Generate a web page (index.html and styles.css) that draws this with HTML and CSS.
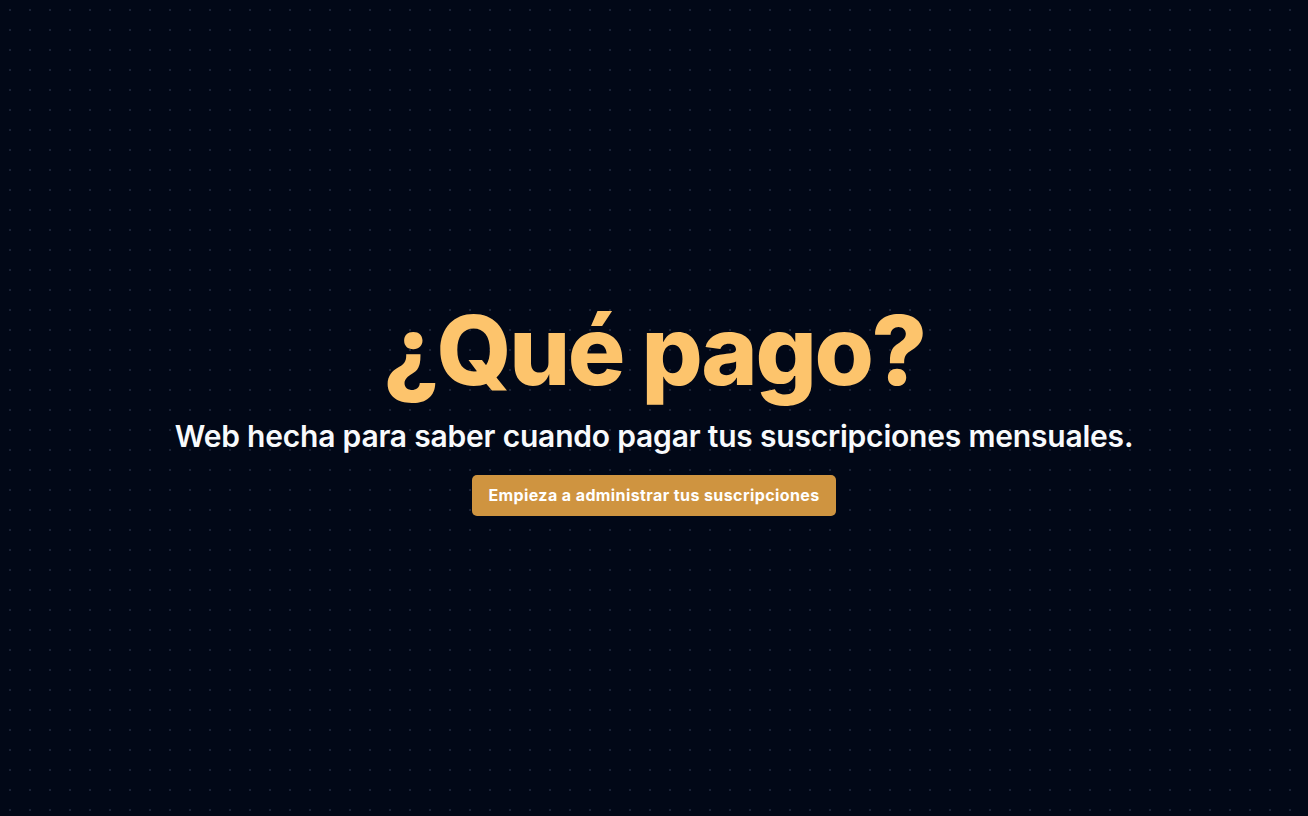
FILE: index.html
```html
<!DOCTYPE html>
<html lang="es">
<head>
<meta charset="utf-8">
<title>¿Qué pago?</title>
<link rel="stylesheet" href="styles.css">
</head>
<body>
<main class="hero">
  <h1 class="title">¿Qué pago?</h1>
  <p class="subtitle">Web hecha para saber cuando pagar tus suscripciones mensuales.</p>
  <a class="cta" href="#">Empieza a administrar tus suscripciones</a>
</main>
</body>
</html>
```
FILE: styles.css
```css
* { box-sizing: border-box; }
html, body { margin: 0; height: 100%; }
body {
  background-color: #020817;
  background-image: radial-gradient(circle, #1a2236 1px, transparent 1.2px);
  background-size: 20px 20px;
  background-position: 0 0;
  font-family: Inter, "Noto Sans", sans-serif;
  color: #f8fafc;
}
.hero {
  min-height: 100vh;
  display: flex;
  flex-direction: column;
  align-items: center;
  justify-content: center;
  padding-top: 2px;
}
.title {
  margin: 0;
  font-size: 96px;
  line-height: 96px;
  font-weight: 800;
  color: #fdc46c;
  letter-spacing: -0.025em;
}
.subtitle {
  margin: 20px 0 0;
  font-size: 30px;
  line-height: 36px;
  font-weight: 600;
  letter-spacing: -0.2px;
}
.cta {
  margin-top: 21px;
  display: inline-block;
  padding: 8px 16px;
  background: #cf9440;
  color: #fff;
  border-radius: 5px;
  font-size: 16px;
  font-weight: 700;
  letter-spacing: 0.025em;
  text-decoration: none;
  line-height: 25px;
}
```
